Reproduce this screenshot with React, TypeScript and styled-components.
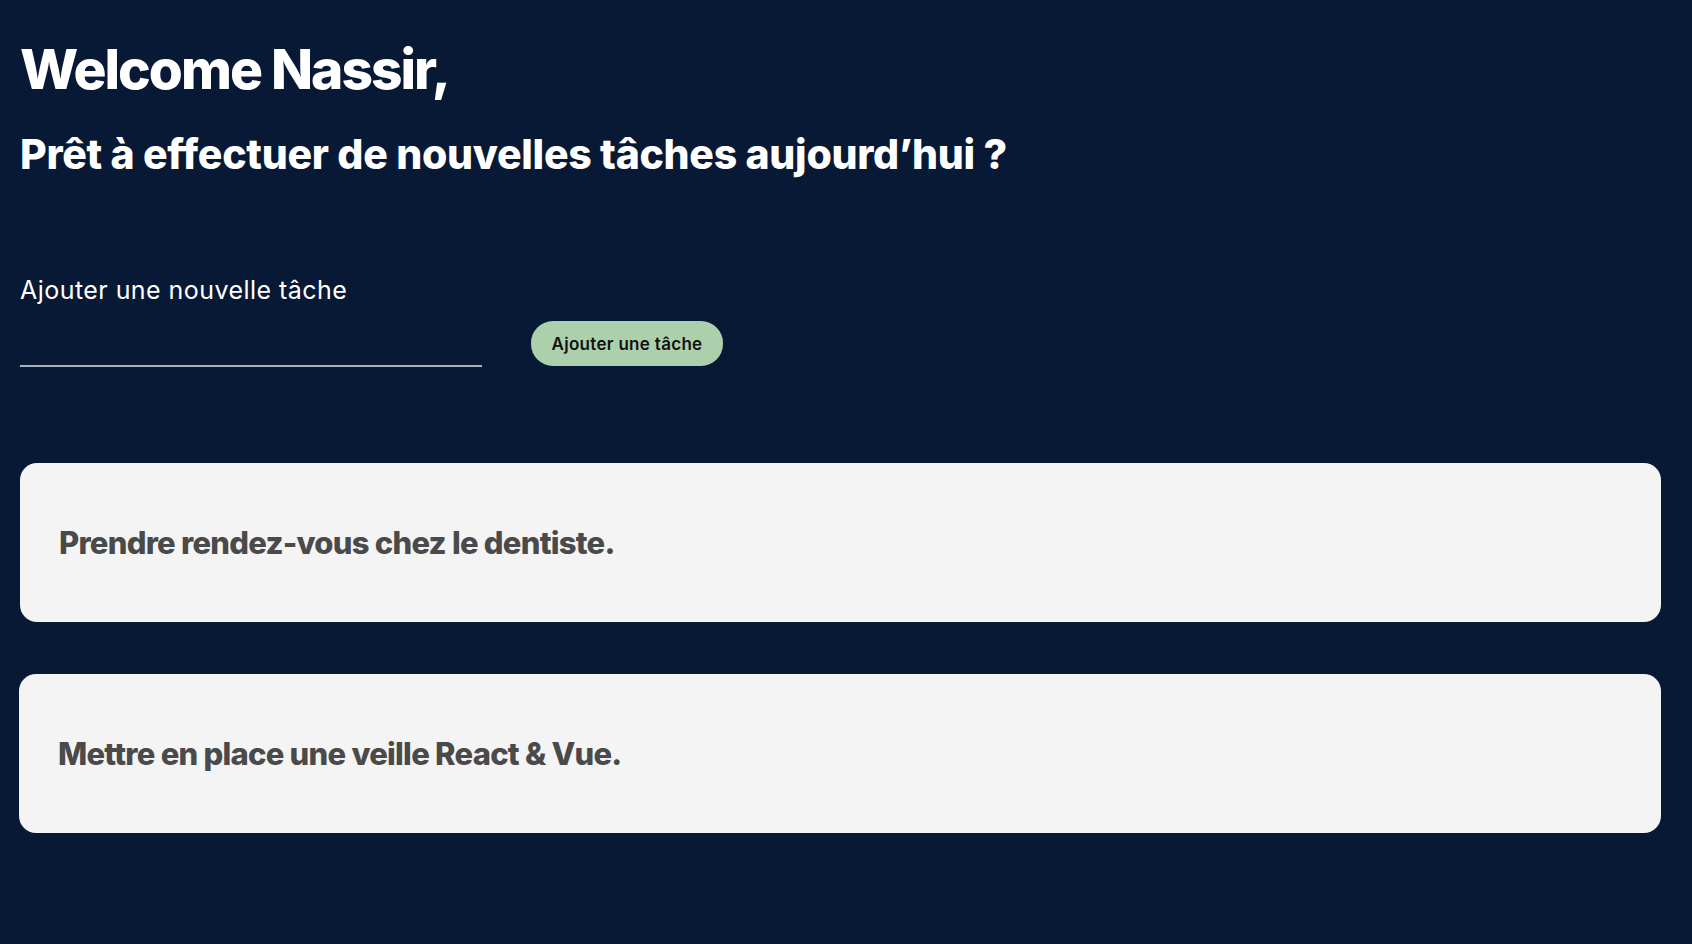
import React, {useState} from 'react';
import styled, {createGlobalStyle} from 'styled-components';

const GlobalStyle = createGlobalStyle`
    html, body {
        margin: 0;
        padding: 0;
        background-color: #081936;
        font-family: Inter, "Liberation Sans", sans-serif;
    }
`

const Page = styled.main`
    min-height: 944px;
    box-sizing: border-box;
    padding: 37px 31px 40px 20px;
    background-color: #081936;
`

const Title = styled.h1`
    margin: 0;
    color: #ffffff;
    font-size: 55px;
    font-weight: 800;
    letter-spacing: -2px;
    line-height: 64px;
`

const Subtitle = styled.h2`
    margin: 29px 0 0;
    color: #ffffff;
    font-size: 41px;
    font-weight: 800;
    letter-spacing: -0.3px;
    line-height: 48px;
`

const Form = styled.form`
    margin-top: 97px;
    display: flex;
    align-items: flex-end;
    gap: 49px;
`

const Field = styled.label`
    display: flex;
    flex-direction: column;
    color: #ffffff;
    font-size: 25px;
    font-weight: 400;
    letter-spacing: 0.45px;
`

const Input = styled.input`
    margin-top: 20px;
    width: 462px;
    height: 40px;
    background: transparent;
    border: none;
    border-bottom: 2px solid #a9afbb;
    color: #ffffff;
    font-family: inherit;
    font-size: 18px;
    outline: none;
    padding: 0;
`

const Button = styled.button`
    height: 45px;
    width: 192px;
    margin-bottom: 1px;
    border: none;
    border-radius: 22px;
    background-color: #add0ac;
    color: #111111;
    font-family: inherit;
    font-size: 17px;
    font-weight: 600;
    letter-spacing: 0.3px;
    cursor: pointer;
`

const List = styled.ul`
    list-style: none;
    margin: 96px 0 0;
    padding: 0;
    display: flex;
    flex-direction: column;
    gap: 52px;
`

const Card = styled.li<{$shift?: number}>`
    height: 159px;
    box-sizing: border-box;
    display: flex;
    align-items: center;
    padding-left: 39px;
    border-radius: 17px;
    background-color: #f4f4f4;
    color: #4a4a4a;
    font-size: 31px;
    font-weight: 800;
    letter-spacing: -0.75px;
    margin-left: ${p => p.$shift ?? 0}px;
`

export default function App() {
    const [tasks] = useState([
        'Prendre rendez-vous chez le dentiste.',
        'Mettre en place une veille React & Vue.',
    ]);

    return <>
        <GlobalStyle />
        <Page>
            <Title>Welcome Nassir,</Title>
            <Subtitle>Prêt à effectuer de nouvelles tâches aujourd’hui ?</Subtitle>
            <Form onSubmit={e => e.preventDefault()}>
                <Field>
                    Ajouter une nouvelle tâche
                    <Input type="text" />
                </Field>
                <Button type="submit">Ajouter une tâche</Button>
            </Form>
            <List>
                {tasks.map((task, i) => (
                    <Card key={task} $shift={i === 1 ? -1 : 0}>{task}</Card>
                ))}
            </List>
        </Page>
    </>
}
